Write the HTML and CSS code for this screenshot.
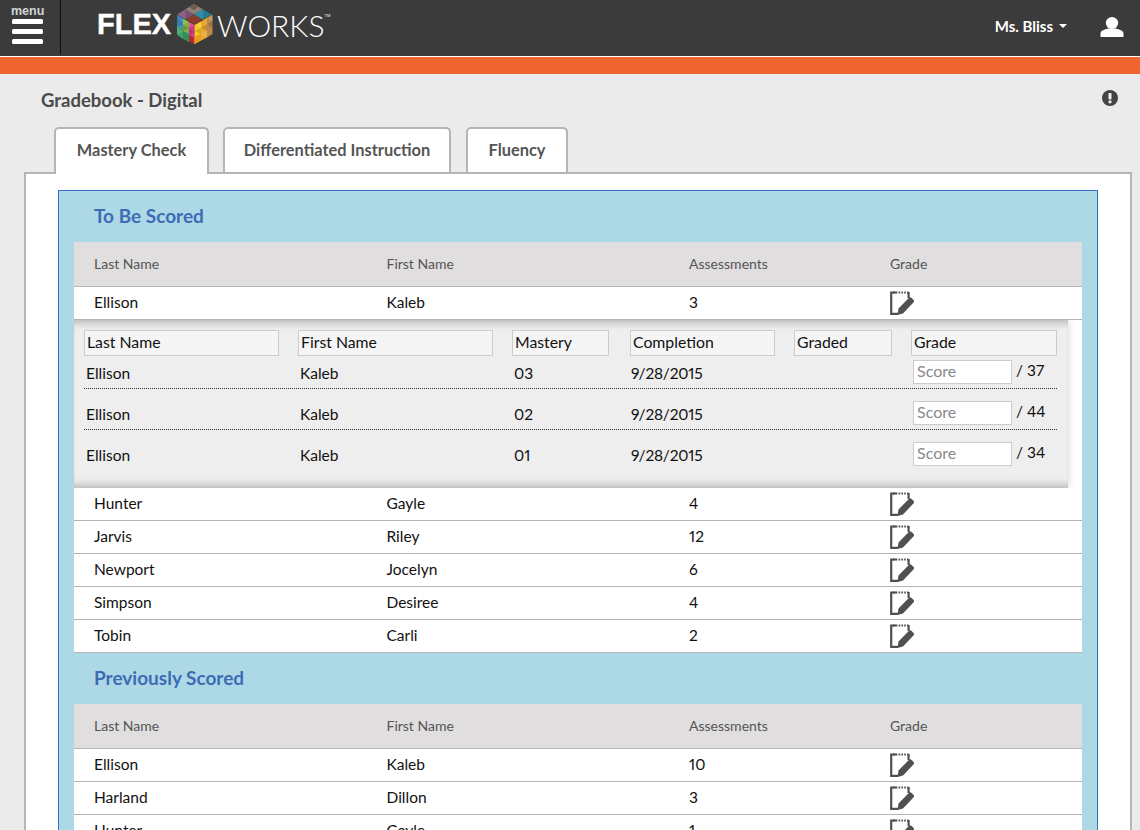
FILE: index.html
```html
<!DOCTYPE html>
<html lang="en">
<head>
<meta charset="utf-8">
<title>Gradebook - Digital</title>
<link rel="stylesheet" href="styles.css">
</head>
<body>
<svg class="defs" width="0" height="0" aria-hidden="true">
  <symbol id="grade" viewBox="0 0 24 24">
    <path d="M6 1.500H1.200V22.800H8" fill="none" stroke="#505050" stroke-width="2.200"/>
    <path d="M3 1.500H18.600" fill="none" stroke="#505050" stroke-width="2.200" stroke-dasharray="1.600 1.200"/>
    <path d="M18.600 1V7" fill="none" stroke="#505050" stroke-width="2.200"/>
    <path d="M8.500 17.500 18.800 7a2 2 0 0 1 2.800 0l1.800 1.800a2 2 0 0 1 0 2.800L13 22.500 7.500 24Z" fill="#505050"/>
  </symbol>
</svg>

<header class="topbar">
  <div class="menu"><span class="menu-label">menu</span><i></i><i></i><i></i></div>
  <div class="logo">
    <span class="flex">FLEX</span>
    <svg class="cube" width="36" height="40" viewBox="0 0 36 40">
      <polygon points="17,0 8,5.500 17,10.500 26,5.500" fill="#8d8074"/>
      <polygon points="8,5.500 0,10.500 9,15.500 17,10.500" fill="#8f5f86"/>
      <polygon points="17,10.500 9,15.500 17.500,20.500 26,15.500" fill="#8c3a2c"/>
      <polygon points="26,5.500 17,10.500 26,15.500 35,10.500" fill="#2e8ea6"/>
      <polygon points="12,3 17,0 21,3 17,6" fill="#6e5a4e"/>
      <polygon points="26,15.500 35,10.500 35,12 26,18" fill="#6f7a35"/>
      <polygon points="0,11 6,14.500 6,35 0,30.500" fill="#3f8fc4"/>
      <polygon points="0,22 6,25.500 6,35 0,30.500" fill="#3f9d62"/>
      <polygon points="6,14.500 12,18 12,38 6,34.500" fill="#7fb23c"/>
      <polygon points="6,27 12,30 12,38 6,34.500" fill="#2e8f5a"/>
      <polygon points="12,18 17.500,21 17.500,40 12,37" fill="#d83a8e"/>
      <polygon points="12,31 17.500,34 17.500,40 12,37" fill="#b5292f"/>
      <polygon points="17.500,21 24,17.500 24,36.500 17.500,40" fill="#f5c91e"/>
      <polygon points="17.500,33 24,29.500 24,36.500 17.500,40" fill="#ee9a22"/>
      <polygon points="24,17.500 30,14 30,33.500 24,36.500" fill="#e9a834"/>
      <polygon points="30,14 35.500,11 35.500,30 30,33.500" fill="#b98a4e"/>
      <g fill="#000" opacity=".14">
        <polygon points="0,11 6,21 0,22"/><polygon points="6,21 12,24 6,27"/><polygon points="12,24 17.500,28 12,31"/>
        <polygon points="17.500,27 24,24 24,30"/><polygon points="24,24 30,20 30,27"/><polygon points="30,20 35.500,17 35.500,24"/>
        <polygon points="8,5.500 17,10.500 9,15.500"/><polygon points="26,5.500 35,10.500 26,15.500"/>
      </g>
      <g fill="#fff" opacity=".12">
        <polygon points="0,22 6,28 0,30.500"/><polygon points="6,14.500 12,18 6,21"/><polygon points="12,18 17.500,21 12,24"/>
        <polygon points="17.500,21 24,17.500 24,24"/><polygon points="24,30 30,27 30,33.500"/><polygon points="30,14 35.500,11 35.500,17"/>
      </g>
    </svg>
    <span class="works">WORKS</span><span class="tm">TM</span>
  </div>
  <div class="user-name">Ms. Bliss<span class="caret"></span></div>
  <svg class="user-icon" width="24" height="20" viewBox="0 0 24 20">
    <ellipse cx="12" cy="6" rx="6.200" ry="6" fill="#fff"/>
    <path d="M0.500 20V16.500C0.500 13.500 5 12.500 8 11.500H16C19 12.500 23.500 13.500 23.500 16.500V20Z" fill="#fff"/>
  </svg>
</header>
<div class="stripe"></div>

<main class="page">
  <div class="title-row">
    <h1>Gradebook - Digital</h1>
    <svg class="alert" width="16" height="16" viewBox="0 0 16 16">
      <circle cx="8" cy="8" r="8" fill="#444"/>
      <rect x="6.500" y="3" width="3" height="6.500" rx=".8" fill="#eee"/>
      <rect x="6.500" y="10.500" width="3" height="2.700" rx=".6" fill="#eee"/>
    </svg>
  </div>
  <nav class="tabs">
    <a class="tab active">Mastery Check</a>
    <a class="tab tab-di">Differentiated Instruction</a>
    <a class="tab tab-fl">Fluency</a>
  </nav>
  <section class="panel">
    <div class="blue">
      <h2>To Be Scored</h2>
      <div class="table">
        <div class="row head"><span>Last Name</span><span>First Name</span><span>Assessments</span><span>Grade</span></div>
        <div class="row"><span>Ellison</span><span>Kaleb</span><span>3</span><svg class="gi"><use href="#grade"/></svg></div>
        <div class="detail-wrap">
          <div class="detail">
            <div class="dhead">
              <span class="c1">Last Name</span><span class="c2">First Name</span><span class="c3">Mastery</span><span class="c4">Completion</span><span class="c5">Graded</span><span class="c6">Grade</span>
            </div>
            <div class="drow"><span>Ellison</span><span>Kaleb</span><span>03</span><span>9/28/2015</span><span></span><span class="score"><input placeholder="Score"> / 37</span></div>
            <div class="drow"><span>Ellison</span><span>Kaleb</span><span>02</span><span>9/28/2015</span><span></span><span class="score"><input placeholder="Score"> / 44</span></div>
            <div class="drow last"><span>Ellison</span><span>Kaleb</span><span>01</span><span>9/28/2015</span><span></span><span class="score"><input placeholder="Score"> / 34</span></div>
          </div>
        </div>
        <div class="row"><span>Hunter</span><span>Gayle</span><span>4</span><svg class="gi"><use href="#grade"/></svg></div>
        <div class="row"><span>Jarvis</span><span>Riley</span><span>12</span><svg class="gi"><use href="#grade"/></svg></div>
        <div class="row"><span>Newport</span><span>Jocelyn</span><span>6</span><svg class="gi"><use href="#grade"/></svg></div>
        <div class="row"><span>Simpson</span><span>Desiree</span><span>4</span><svg class="gi"><use href="#grade"/></svg></div>
        <div class="row"><span>Tobin</span><span>Carli</span><span>2</span><svg class="gi"><use href="#grade"/></svg></div>
      </div>
      <h2 class="second">Previously Scored</h2>
      <div class="table">
        <div class="row head"><span>Last Name</span><span>First Name</span><span>Assessments</span><span>Grade</span></div>
        <div class="row"><span>Ellison</span><span>Kaleb</span><span>10</span><svg class="gi"><use href="#grade"/></svg></div>
        <div class="row"><span>Harland</span><span>Dillon</span><span>3</span><svg class="gi"><use href="#grade"/></svg></div>
        <div class="row"><span>Hunter</span><span>Gayle</span><span>1</span><svg class="gi"><use href="#grade"/></svg></div>
      </div>
    </div>
  </section>
</main>
</body>
</html>
```
FILE: styles.css
```css
* { box-sizing: border-box; }
html, body { margin: 0; height: 830px; overflow: hidden; }
body {
  background: #ebebeb;
  font-family: Lato, "Open Sans", sans-serif;
  font-variant-numeric: proportional-nums;
  color: #111;
}
.defs { position: absolute; }

.topbar {
  height: 56px;
  background: #3b3b3b;
  display: flex;
  align-items: flex-start;
}
.menu {
  width: 61px;
  height: 54px;
  border-right: 1px solid #0d0d0d;
  padding: 5px 0 0 12px;
  display: flex;
  flex-direction: column;
}
.menu-label {
  font: 700 12.500px/13px "Liberation Sans", sans-serif;
  color: #d4d4d4;
  margin: 0 0 1px -1px;
}
.menu i {
  width: 31px;
  height: 5px;
  margin-bottom: 5px;
  background: #fff;
  border-radius: 1.500px;
}
.logo {
  margin-left: 36px;
  width: 260px;
  height: 50px;
  display: flex;
  align-items: flex-start;
  color: #fff;
}
.flex {
  font: 700 29px/30px "Liberation Sans", sans-serif;
  margin-top: 9px;
  width: 80px;
  -webkit-text-stroke: .4px #fff;
}
.cube { margin-top: 4px; flex: none; }
.works {
  font: 300 30px/30px Lato, sans-serif;
  margin: 10px 0 0 4px;
}
.tm { font: 400 4px/6px "Liberation Sans", sans-serif; margin-top: 13px; }
.user-name {
  margin-left: auto;
  font: 700 15px/18px Lato, sans-serif;
  color: #fff;
  margin-top: 17px;
  display: flex;
  align-items: center;
}
.caret {
  margin-left: 6px;
  border: 4px solid transparent;
  border-top-color: #fff;
  border-bottom: 0;
}
.user-icon { margin: 17px 16px 0 33px; }

.stripe {
  height: 18px;
  border-top: 1px solid #fff;
  background: #f0652f;
}

.page { padding: 0 8px 0 24px; }
.title-row {
  display: flex;
  justify-content: space-between;
  padding: 15px 14px 0 17px;
  height: 53px;
}
h1 {
  margin: 0;
  font: 700 18.500px/22px Lato, sans-serif;
  color: #4a4a4a;
}
.alert { margin-top: 1px; }
.tabs {
  display: flex;
  align-items: flex-start;
  height: 47px;
  padding-left: 30px;
  position: relative;
  z-index: 1;
  margin-bottom: -2px;
}
.tab {
  width: 155px;
  height: 45px;
  margin-right: 14px;
  border: 2px solid #b5b5b5;
  border-bottom: 0;
  border-radius: 5px 5px 0 0;
  background: #fff;
  font: 700 16.400px/41px Lato, sans-serif;
  color: #555;
  text-align: center;
}
.tab-di { width: 228px; margin-right: 15px; }
.tab-fl { width: 102px; }
.active { height: 47px; }

.panel {
  height: 700px;
  border: 2px solid #b5b5b5;
  background: #fff;
  padding: 16px 32px 0;
}
.blue {
  border: 1px solid #3b6fbf;
  background: #add8e6;
  padding: 0 15px;
  height: 700px;
}
h2 {
  margin: 0;
  padding: 13px 0 0 20px;
  height: 51px;
  font: 700 19px/23px Lato, sans-serif;
  color: #3d6cb5;
}
.row {
  display: grid;
  grid-template-columns: 292.500px 302.500px 201px 1fr;
  padding-left: 20px;
  height: 33px;
  align-items: center;
  background: #fff;
  border-bottom: 1px solid #b4b4b8;
  font-size: 15.500px;
}
.row span { margin-bottom: 2px; }
.head {
  height: 45px;
  background: #e0dede;
  border-bottom: 1px solid #b5b5b5;
  font-size: 14px;
  color: #555;
}
.gi { width: 24px; height: 24px; }
.detail-wrap {
  background: #fff;
  padding-right: 14px;
  overflow: hidden;
  height: 168px;
}
.detail {
  height: 168px;
  background: #eee;
  padding: 10px 11px 0 10px;
  box-shadow: inset 0 9px 8px -7px rgba(0,0,0,.28), inset 0 -9px 8px -7px rgba(0,0,0,.28), 0 0 8px rgba(0,0,0,.18);
}
.dhead, .drow {
  display: grid;
  grid-template-columns: 214px 214px 118px 164px 117px 146px;
}
.dhead span {
  height: 26px;
  margin-right: 19px;
  border: 1px solid #ccc;
  background: #f5f5f5;
  padding-left: 2px;
  font-size: 15.800px;
  line-height: 22px;
}
.dhead .c6 { margin-right: 0; }
.dhead .c3 { margin-right: 21px; }
.drow {
  height: 41px;
  font-size: 15.500px;
  line-height: 35px;
  padding-top: 8px;
  border-bottom: 1px dotted #333;
}
.dhead + .drow { height: 33px; padding-top: 0; }
.drow span { padding-left: 2px; }
.drow.last { border-bottom: 0; }
.drow span:nth-child(4) { padding-left: 1px; letter-spacing: -.2px; }
.drow .score {
  display: flex;
  align-items: flex-start;
  gap: 4px;
  padding-top: 4px;
  line-height: 21px;
  white-space: nowrap;
}
.score input {
  width: 99px;
  height: 24px;
  border: 1px solid #ccc;
  background: #fff;
  padding: 0 3px 3px;
  font: 16px Lato, sans-serif;
}
.score input::placeholder { color: #8a8a8a; opacity: 1; }
```
